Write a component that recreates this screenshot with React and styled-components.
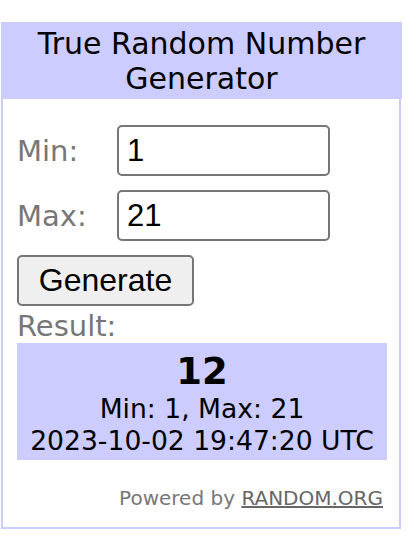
import { useState } from "react";
import styled, { createGlobalStyle } from "styled-components";

const GlobalStyle = createGlobalStyle`
  body {
    margin: 0;
    background: #fff;
    font-family: "DejaVu Sans", Verdana, sans-serif;
  }
`;

const Page = () => {
  const [min, setMin] = useState("1");
  const [max, setMax] = useState("21");

  return (
    <Wrapper>
      <GlobalStyle />
      <Widget>
        <Header>True Random Number Generator</Header>
        <Body>
          <Row>
            <Label>Min:</Label>
            <Input type="text" value={min} onChange={(e) => setMin(e.target.value)} />
          </Row>
          <Row>
            <Label>Max:</Label>
            <Input type="text" value={max} onChange={(e) => setMax(e.target.value)} />
          </Row>
          <Button type="button">Generate</Button>
          <Label>Result:</Label>
          <ResultBox>
            <Number>12</Number>
            <Detail>Min: 1, Max: 21</Detail>
            <Detail>2023-10-02 19:47:20 UTC</Detail>
          </ResultBox>
          <Footer>
            Powered by <FooterLink href="#">RANDOM.ORG</FooterLink>
          </Footer>
        </Body>
      </Widget>
    </Wrapper>
  );
};

export default Page;

const Wrapper = styled.div`
  padding: 22px 0 0 1px;
`;

const Widget = styled.div`
  width: 401px;
`;

const Header = styled.div`
  background: #ccccff;
  color: #000;
  text-align: center;
  font-size: 30px;
  line-height: 35px;
  padding: 4px 18px 3px;
`;

const Body = styled.div`
  width: 400px;
  box-sizing: border-box;
  border: 2px solid #ccccff;
  border-top: none;
  padding: 26px 12px 17px 14px;
  display: flex;
  flex-direction: column;
  align-items: flex-start;
`;

const Row = styled.div`
  display: flex;
  align-items: center;
  margin-bottom: 14px;
`;

const Label = styled.div`
  width: 100px;
  color: #777;
  font-size: 29px;
  line-height: 34px;
`;

const Input = styled.input`
  width: 213px;
  height: 51px;
  box-sizing: border-box;
  border: 2px solid #767676;
  border-radius: 5px;
  padding: 0 8px;
  font-family: "Liberation Sans", Arial, sans-serif;
  font-size: 31px;
  color: #000;
  outline: none;
`;

const Button = styled.button`
  width: 177px;
  height: 51px;
  box-sizing: border-box;
  background: #efefef;
  border: 2px solid #767676;
  border-radius: 5px;
  font-family: "Liberation Sans", Arial, sans-serif;
  font-size: 32px;
  color: #000;
  padding: 0;
  margin-bottom: 3px;
`;

const ResultBox = styled.div`
  align-self: stretch;
  background: #ccccff;
  text-align: center;
  padding: 8px 0 3px;
`;

const Number = styled.div`
  font-size: 37px;
  font-weight: bold;
  line-height: 42px;
`;

const Detail = styled.div`
  font-size: 26.6px;
  line-height: 32px;
`;

const Footer = styled.div`
  align-self: stretch;
  text-align: right;
  padding-right: 4px;
  margin-top: 26px;
  font-size: 20px;
  line-height: 24px;
  color: #777;
`;

const FooterLink = styled.a`
  color: #666;
  text-decoration: underline;
`;
